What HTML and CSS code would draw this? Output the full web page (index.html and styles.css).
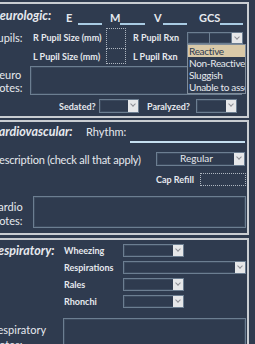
FILE: index.html
```html
<!DOCTYPE html>
<html lang="en">
<head>
    <meta charset="UTF-8">
    <meta name="viewport" content="width=device-width, initial-scale=1.0">
    <link rel="stylesheet" href="styles.css">
</head>
<body>

<div class="form">

    <!-- neuro -->
    <section class="panel panel-neuro">
        <div class="gcs-row">
            <span class="title w-neuro">Neurologic:</span>
            <span class="gcs-label g-e">E</span><span class="gcs-line w24"></span>
            <span class="gcs-label g-m">M</span><span class="gcs-line w25"></span>
            <span class="gcs-label g-v">V</span><span class="gcs-line w24"></span>
            <span class="gcs-label g-gcs">GCS</span><span class="gcs-line w23"></span>
        </div>

        <div class="pupil-row">
            <div class="pupil-head">Pupils:</div>
            <div class="pupil-sizes">
                <div class="small-label">R Pupil Size (mm)</div>
                <div class="small-label">L Pupil Size (mm)</div>
            </div>
            <div class="dot-stack">
                <div class="dotbox dot-tall"></div>
                <div class="dotbox dot-short"></div>
            </div>
            <div class="pupil-rxn">
                <div class="small-label">R Pupil Rxn</div>
                <div class="small-label">L Pupil Rxn</div>
            </div>
            <div class="rxn-wrap">
                <div class="combo combo-rxn">
                    <span class="combo-cell"></span>
                    <span class="combo-cell"></span>
                    <span class="combo-btn"></span>
                </div>
                <ul class="dropdown">
                    <li class="selected">Reactive</li>
                    <li>Non-Reactive</li>
                    <li>Sluggish</li>
                    <li>Unable to assess</li>
                </ul>
            </div>
        </div>

        <div class="notes-row notes-neuro">
            <div class="notes-label w39">Neuro<br>Notes:</div>
            <div class="textbox"></div>
        </div>

        <div class="sed-row">
            <span class="small-label sed-label">Sedated?</span>
            <div class="combo w40"><span class="combo-text"></span><span class="combo-btn"></span></div>
            <span class="small-label par-label">Paralyzed?</span>
            <div class="combo w41"><span class="combo-text"></span><span class="combo-btn"></span></div>
        </div>
    </section>

    <!-- cardio -->
    <section class="panel panel-cardio">
        <div class="cardio-head">
            <span class="title w-cardio">Cardiovascular:</span>
            <span class="rhythm">Rhythm:</span>
            <span class="rhythm-line"></span>
        </div>

        <div class="desc-row">
            <span class="desc-label">Description (check all that apply)</span>
            <div class="combo w89"><span class="combo-text center">Regular</span><span class="combo-btn"></span></div>
        </div>

        <div class="cap-row">
            <span class="small-label cap-label">Cap Refill</span>
            <div class="dotbox dot-cap"></div>
        </div>

        <div class="notes-row notes-cardio">
            <div class="notes-label w42">Cardio<br>Notes:</div>
            <div class="textbox"></div>
        </div>
    </section>

    <!-- resp -->
    <section class="panel panel-resp">
        <div class="resp-row first">
            <span class="title w-resp">Respiratory:</span>
            <span class="small-label resp-label">Wheezing</span>
            <div class="combo w61"><span class="combo-text"></span><span class="combo-btn"></span></div>
        </div>
        <div class="resp-row indent">
            <span class="small-label resp-label">Respirations</span>
            <div class="combo w123"><span class="combo-text"></span><span class="combo-btn"></span></div>
        </div>
        <div class="resp-row indent">
            <span class="small-label resp-label">Rales</span>
            <div class="combo w61"><span class="combo-text"></span><span class="combo-btn"></span></div>
        </div>
        <div class="resp-row indent">
            <span class="small-label resp-label">Rhonchi</span>
            <div class="combo w61"><span class="combo-text"></span><span class="combo-btn"></span></div>
        </div>

        <div class="notes-row notes-resp">
            <div class="notes-label w72">Respiratory<br>Notes:</div>
            <div class="textbox"></div>
        </div>
    </section>

</div>

</body>
</html>
```

FILE: styles.css
```css
body {
    margin: 0;
    background-color: #2f3b4f;
    color: #e6e9ee;
    font-family: Lato, 'Open Sans', sans-serif;
    font-size: 11px;
    overflow: hidden;
}

.form {
    margin-left: -9px;
    width: 258px;
}

.panel {
    border: 2px solid #c9cdd2;
    border-left: none;
}

.panel-neuro {
    margin-top: 2px;
    padding-bottom: 3px;
}

.panel-cardio {
    margin-top: 2px;
    padding-bottom: 5px;
}

.panel-resp {
    margin-top: 3px;
    height: 120px;
}

.title {
    font-weight: bold;
    font-style: italic;
    font-size: 12.5px;
    line-height: 14px;
}

.small-label {
    font-weight: bold;
    font-size: 9px;
    white-space: nowrap;
}

/* gcs row */
.gcs-row {
    display: flex;
    align-items: flex-end;
    height: 21px;
}

.w-neuro { width: 75px; padding-bottom: 2px; }

.gcs-label {
    font-weight: bold;
    font-size: 11px;
    line-height: 13px;
    padding-bottom: 1px;
}

.g-e { width: 12px; }
.g-m { width: 10px; margin-left: 8px; }
.g-v { width: 9px; margin-left: 9px; }
.g-gcs { width: 21px; margin-left: 12px; }

.gcs-line {
    height: 2px;
    background-color: #a9cbe3;
}

.w23 { width: 23px; }
.w24 { width: 24px; }
.w25 { width: 25px; }

/* pupils */
.pupil-row {
    display: flex;
    margin-top: 3px;
    height: 38px;
}

.pupil-head {
    width: 42px;
    line-height: 19px;
}

.pupil-sizes {
    width: 73px;
}

.pupil-sizes .small-label,
.pupil-rxn .small-label {
    height: 19px;
    line-height: 19px;
}

.dot-stack {
    width: 20px;
}

.dotbox {
    box-sizing: border-box;
    border: 1px dotted #aeb6c0;
}

.dot-tall { height: 21px; }
.dot-short { height: 15px; border-top: none; }

.pupil-rxn {
    margin-left: 7px;
    width: 54px;
}

.rxn-wrap {
    position: relative;
    align-self: flex-start;
    margin-top: 4px;
    width: 56px;
}

.combo {
    display: flex;
    box-sizing: border-box;
    height: 13px;
    border: 1px solid #6c7e91;
    box-shadow: inset 0 0 0 1px #3c4a5e;
}

.combo-rxn { height: 12px; }

.combo-cell {
    flex: 1;
    border-right: 1px solid #6c7e91;
}

.combo-text {
    flex: 1;
    font-size: 10px;
    line-height: 11px;
    padding-left: 2px;
}

.combo-text.center {
    text-align: center;
}

.combo-btn {
    width: 10px;
    background-color: #e6e7e9;
    position: relative;
}

.combo-btn::after {
    content: "";
    position: absolute;
    left: 3px;
    top: 2px;
    width: 3px;
    height: 3px;
    border-right: 1px solid #8d8f94;
    border-bottom: 1px solid #8d8f94;
    transform: rotate(45deg);
}

.dropdown {
    position: absolute;
    top: 100%;
    left: 0;
    width: 57px;
    margin: 0;
    padding: 0;
    list-style: none;
    background-color: #2f3b4f;
    border: 1px solid #7f8c9a;
    overflow: hidden;
    white-space: nowrap;
    z-index: 2;
}

.dropdown li {
    height: 12px;
    line-height: 12px;
    padding-left: 1px;
    font-size: 10px;
    letter-spacing: -0.3px;
}

.dropdown li.selected {
    background-color: #d9c9a8;
    color: #2f3b4f;
}

/* notes */
.notes-row {
    display: flex;
}

.notes-neuro { height: 29px; }
.notes-cardio { height: 32px; margin-top: 10px; }
.notes-resp { height: 45px; margin-top: 10px; }

.notes-label {
    line-height: 13px;
    padding-top: 2px;
}

.notes-cardio .notes-label {
    line-height: 14px;
    padding-top: 4px;
}

.notes-resp .notes-label {
    line-height: 15px;
    padding-top: 4px;
}

.w39 { width: 39px; }
.w42 { width: 42px; }
.w72 { width: 72px; }

.textbox {
    flex: 1;
    box-sizing: border-box;
    border: 1px solid #6c7e91;
    box-shadow: inset 0 0 0 1px #3c4a5e;
    margin-right: 3px;
}

.notes-neuro .textbox { margin-right: 5px; }
.notes-cardio .textbox { margin-right: 1px; }
.notes-resp .textbox { margin-right: 1px; }

/* sedated */
.sed-row {
    display: flex;
    align-items: center;
    margin-top: 4px;
    height: 14px;
}

.sed-row .combo { height: 14px; }

.sed-label { margin-left: 68px; width: 40px; }
.par-label { margin-left: 8px; width: 49px; }

.w40 { width: 40px; }
.w41 { width: 41px; }
.w61 { width: 61px; }
.w89 { width: 89px; }
.w123 { width: 123px; }

/* cardio */
.cardio-head {
    display: flex;
    align-items: flex-end;
    height: 21px;
}

.w-cardio { width: 95px; padding-bottom: 4px; }

.rhythm {
    width: 44px;
    line-height: 14px;
    padding-bottom: 4px;
}

.rhythm-line {
    width: 115px;
    height: 2px;
    background-color: #c5dff0;
}

.desc-row {
    display: flex;
    align-items: center;
    margin-top: 9px;
    height: 14px;
}

.desc-row .combo { height: 14px; }

.desc-label {
    width: 165px;
    white-space: nowrap;
    letter-spacing: -0.2px;
}

.cap-row {
    display: flex;
    align-items: center;
    margin-top: 7px;
    height: 13px;
}

.cap-label {
    margin-left: 165px;
    width: 44px;
}

.dot-cap {
    width: 46px;
    height: 13px;
}

/* resp */
.resp-row {
    display: flex;
    align-items: center;
    height: 13px;
    margin-top: 4px;
}

.resp-row.first { margin-top: 4px; }
.resp-row.indent { padding-left: 73px; }

.w-resp { width: 73px; }

.resp-label { width: 59px; }
```
